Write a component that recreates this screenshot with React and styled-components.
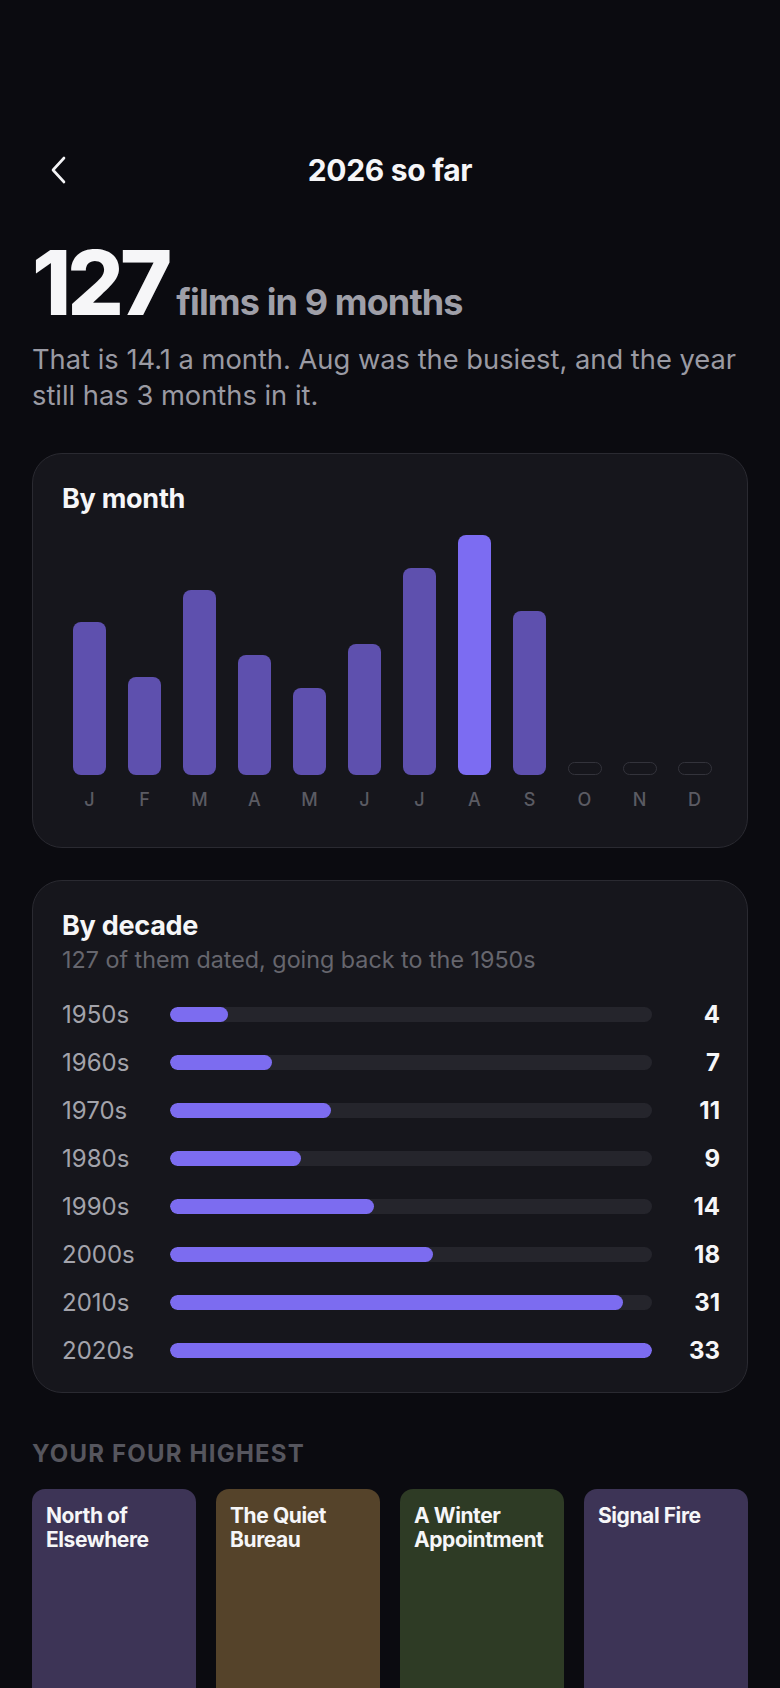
import React from 'react';
import styled, { createGlobalStyle } from 'styled-components';

const months = [
  { label: 'J', count: 14 },
  { label: 'F', count: 9 },
  { label: 'M', count: 17 },
  { label: 'A', count: 11 },
  { label: 'M', count: 8 },
  { label: 'J', count: 12 },
  { label: 'J', count: 19 },
  { label: 'A', count: 22 },
  { label: 'S', count: 15 },
  { label: 'O', count: null },
  { label: 'N', count: null },
  { label: 'D', count: null },
];

const decades = [
  { label: '1950s', count: 4 },
  { label: '1960s', count: 7 },
  { label: '1970s', count: 11 },
  { label: '1980s', count: 9 },
  { label: '1990s', count: 14 },
  { label: '2000s', count: 18 },
  { label: '2010s', count: 31 },
  { label: '2020s', count: 33 },
];

const posters = [
  { title: 'North of Elsewhere', color: '#3d3456' },
  { title: 'The Quiet Bureau', color: '#55432a' },
  { title: 'A Winter Appointment', color: '#2e3b25' },
  { title: 'Signal Fire', color: '#3d3456' },
];

const CHART_HEIGHT = 240;

const GlobalStyle = createGlobalStyle`
  html, body {
    margin: 0;
    background: #0b0b10;
  }
  body {
    font-family: Inter, "Noto Sans", sans-serif;
    color: #f4f4f6;
    -webkit-font-smoothing: antialiased;
  }
  * { box-sizing: border-box; }
`;

const Page = styled.div`
  min-height: 1688px;
  padding: 142px 32px 0;
  overflow: hidden;
`;

const Header = styled.header`
  height: 56px;
  display: grid;
  grid-template-columns: 56px 1fr 56px;
  align-items: center;
`;

const BackButton = styled.button`
  background: none;
  border: 0;
  width: 40px;
  height: 40px;
  display: flex;
  align-items: center;
  justify-content: flex-start;
  padding: 0 0 0 18px;
  color: #f4f4f6;
  cursor: pointer;
`;

const Title = styled.h1`
  margin: 0;
  text-align: center;
  font-size: 30px;
  font-weight: 700;
  letter-spacing: -0.01em;
  color: #f6f6f8;
`;

const Hero = styled.div`
  margin-top: 40px;
  display: flex;
  align-items: baseline;
  gap: 8px;
`;

const BigNumber = styled.span`
  font-size: 89px;
  line-height: 1;
  font-weight: 800;
  letter-spacing: -0.045em;
  color: #f6f6f8;
`;

const HeroUnit = styled.span`
  font-size: 36px;
  font-weight: 700;
  letter-spacing: -0.025em;
  color: #9f9fa8;
`;

const Lead = styled.p`
  margin: 15px 0 0;
  font-size: 27.3px;
  line-height: 36px;
  color: #9a9aa3;
`;

const Card = styled.section`
  margin-top: ${(p) => p.$gap}px;
  background: #16161c;
  border: 1px solid #2a2a31;
  border-radius: 30px;
  padding: 30px 27px ${(p) => p.$bottom}px;
`;

const CardTitle = styled.h2`
  margin: 0 0 0 2px;
  font-size: 27px;
  line-height: 30px;
  font-weight: 700;
  letter-spacing: -0.01em;
  color: #f6f6f8;
`;

const CardSub = styled.p`
  margin: 6px 0 0 2px;
  font-size: 23.3px;
  line-height: 26px;
  color: #66666e;
`;

const Chart = styled.div`
  margin: 21px -2px 0 2px;
  display: grid;
  grid-template-columns: repeat(12, 1fr);
`;

const MonthCol = styled.div`
  display: flex;
  flex-direction: column;
  align-items: center;
`;

const BarSlot = styled.div`
  height: ${CHART_HEIGHT}px;
  width: 100%;
  display: flex;
  align-items: flex-end;
  justify-content: center;
`;

const Bar = styled.div`
  width: 33px;
  border-radius: 8px;
  background: ${(p) => (p.$peak ? '#7c6cf2' : '#5e50ae')};
`;

const EmptyBar = styled.div`
  width: 34px;
  height: 13px;
  border-radius: 7px;
  border: 1.5px solid #33333b;
`;

const MonthLabel = styled.span`
  margin-top: 15px;
  font-size: 18px;
  line-height: 20px;
  font-weight: 500;
  color: #5b5b63;
`;

const DecadeList = styled.div`
  margin-top: 27px;
  display: flex;
  flex-direction: column;
  gap: 20px;
`;

const DecadeRow = styled.div`
  height: 28px;
  display: grid;
  grid-template-columns: 110px 1fr 68px;
  align-items: center;
`;

const DecadeLabel = styled.span`
  margin-left: 2px;
  font-size: 24px;
  color: #a3a3ab;
`;

const Track = styled.div`
  height: 15px;
  border-radius: 8px;
  background: #25252c;
  overflow: hidden;
`;

const Fill = styled.div`
  height: 100%;
  border-radius: 8px;
  background: #7c6cf0;
`;

const DecadeValue = styled.span`
  text-align: right;
  font-size: 24px;
  font-weight: 700;
  color: #f6f6f8;
`;

const SectionLabel = styled.h3`
  margin: 48px 0 0;
  font-size: 24px;
  line-height: 26px;
  font-weight: 700;
  letter-spacing: 0.05em;
  color: #56565e;
`;

const PosterGrid = styled.div`
  margin-top: 22px;
  display: grid;
  grid-template-columns: repeat(4, 1fr);
  gap: 20px;
`;

const Poster = styled.div`
  height: 250px;
  border-radius: 13px;
  padding: 15px 14px;
  background: ${(p) => p.$color};
`;

const PosterTitle = styled.span`
  display: block;
  font-size: 21px;
  line-height: 24px;
  font-weight: 700;
  letter-spacing: -0.02em;
  color: #f6f6f8;
`;

const ChevronLeft = () => (
  <svg width="16" height="28" viewBox="0 0 16 28" fill="none">
    <path d="M14 2 3 14l11 12" stroke="currentColor" strokeWidth="2.6" strokeLinecap="round" strokeLinejoin="round" />
  </svg>
);

const App = () => {
  const maxMonth = Math.max(...months.map((m) => m.count || 0));
  const maxDecade = Math.max(...decades.map((d) => d.count));

  return (
    <>
      <GlobalStyle />
      <Page>
        <Header>
          <BackButton aria-label="Back">
            <ChevronLeft />
          </BackButton>
          <Title>2026 so far</Title>
          <span />
        </Header>

        <Hero>
          <BigNumber>127</BigNumber>
          <HeroUnit>films in 9 months</HeroUnit>
        </Hero>
        <Lead>That is 14.1 a month. Aug was the busiest, and the year still has 3 months in it.</Lead>

        <Card $gap={39} $bottom={37}>
          <CardTitle>By month</CardTitle>
          <Chart>
            {months.map((m, i) => (
              <MonthCol key={i}>
                <BarSlot>
                  {m.count ? (
                    <Bar
                      $peak={m.count === maxMonth}
                      style={{ height: (m.count / maxMonth) * CHART_HEIGHT }}
                    />
                  ) : (
                    <EmptyBar />
                  )}
                </BarSlot>
                <MonthLabel>{m.label}</MonthLabel>
              </MonthCol>
            ))}
          </Chart>
        </Card>

        <Card $gap={32} $bottom={28}>
          <CardTitle>By decade</CardTitle>
          <CardSub>127 of them dated, going back to the 1950s</CardSub>
          <DecadeList>
            {decades.map((d) => (
              <DecadeRow key={d.label}>
                <DecadeLabel>{d.label}</DecadeLabel>
                <Track>
                  <Fill style={{ width: `${(d.count / maxDecade) * 100}%` }} />
                </Track>
                <DecadeValue>{d.count}</DecadeValue>
              </DecadeRow>
            ))}
          </DecadeList>
        </Card>

        <SectionLabel>YOUR FOUR HIGHEST</SectionLabel>
        <PosterGrid>
          {posters.map((p) => (
            <Poster key={p.title} $color={p.color}>
              <PosterTitle>{p.title}</PosterTitle>
            </Poster>
          ))}
        </PosterGrid>
      </Page>
    </>
  );
};

export default App;
